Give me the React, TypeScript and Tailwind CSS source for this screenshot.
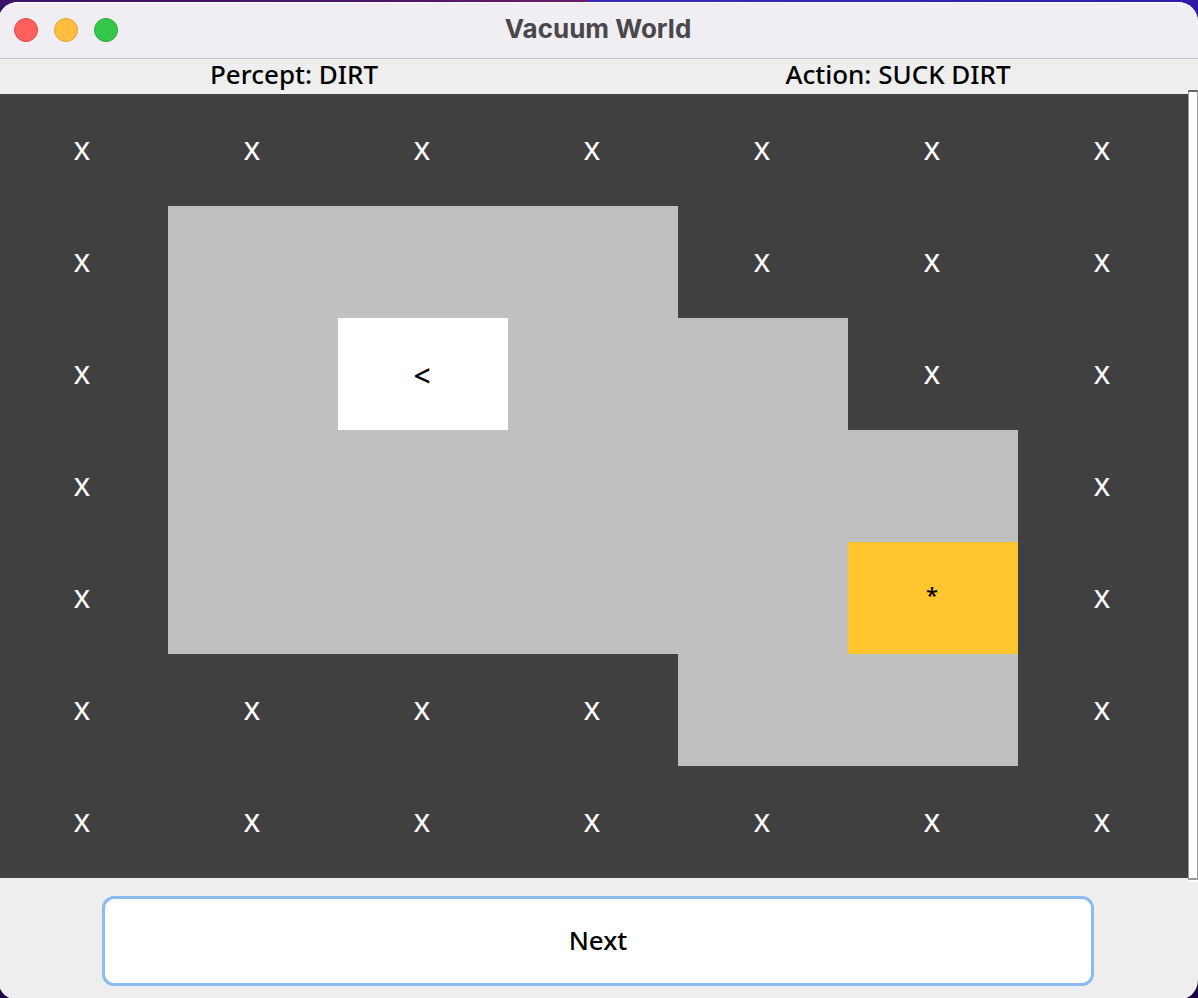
import { useState } from "react";

type Cell = "wall" | "floor" | "agent" | "dirt";

const CODES: Record<string, Cell> = { X: "wall", ".": "floor", "<": "agent", "*": "dirt" };

const WORLD = ["XXXXXXX", "X...XXX", "X.<..XX", "X.....X", "X....*X", "XXXX..X", "XXXXXXX"];

const CELL_STYLE: Record<Cell, string> = {
  wall: "bg-[#404040] text-white",
  floor: "bg-[#c0c0c0] text-black",
  agent: "bg-white pt-0.5 text-[30px] text-black",
  dirt: "bg-[#ffc62f] pb-2 text-[22px] text-black",
};

function TitleBar() {
  return (
    <header className="grid h-[57px] shrink-0 grid-cols-[1fr_auto_1fr] items-center border-b border-[#c8c6ca] bg-[#f0eef3] px-4 shadow-[inset_0_1px_0_#ffffff]">
      <div className="flex gap-4">
        <button aria-label="Close" className="size-6 rounded-full border border-[#e24b48] bg-[#ff605b]" />
        <button aria-label="Minimize" className="size-6 rounded-full border border-[#dfa036] bg-[#ffbd40]" />
        <button aria-label="Zoom" className="size-6 rounded-full border border-[#27aa36] bg-[#34c84a]" />
      </div>
      <h1 className="pb-0.5 font-[Inter,sans-serif] text-[26px] leading-8 font-bold text-[#49474b]">Vacuum World</h1>
    </header>
  );
}

export default function App() {
  const [, setStep] = useState(0);

  return (
    <div className="flex h-screen flex-col overflow-hidden bg-[linear-gradient(to_bottom,transparent_50%,#1c0048_50%),linear-gradient(to_right,#3b1168_0%,#4a1468_30%,#6b1b66_49%,#3a2cb8_49%,#2f1ba8_100%)] pt-0.5 font-['Noto_Sans',sans-serif] text-[26px] font-medium">
      <main className="-mb-0.5 -ml-0.5 flex flex-1 flex-col overflow-hidden rounded-[20px] bg-[#eeeeee]">
        <TitleBar />
        <div className="grid h-[35px] shrink-0 grid-cols-2 text-center leading-[30px] text-black">
          <p className="pr-2">Percept: DIRT</p>
          <p>Action: SUCK DIRT</p>
        </div>
        <div className="flex shrink-0">
          <div className="grid flex-1 grid-cols-7">
            {WORLD.flatMap((row, y) =>
              row.split("").map((code, x) => (
                <div
                  key={`${x}-${y}`}
                  className={`flex h-28 items-center justify-center pr-0.5 ${CELL_STYLE[CODES[code]]}`}
                >
                  {code === "." ? "" : code}
                </div>
              )),
            )}
          </div>
          <div className="-my-1 w-2.5 border-b-2 border-white">
            <div className="h-full border-x border-t-2 border-b-2 border-[#999999] border-t-[#666666] bg-white" />
          </div>
        </div>
        <div className="flex-1 px-[104px] pt-[18px]">
          <button
            onClick={() => setStep((step) => step + 1)}
            className="h-[90px] w-full rounded-xl border-3 border-[#8bbcee] bg-white pb-0.5 text-black outline-none"
          >
            Next
          </button>
        </div>
      </main>
    </div>
  );
}
